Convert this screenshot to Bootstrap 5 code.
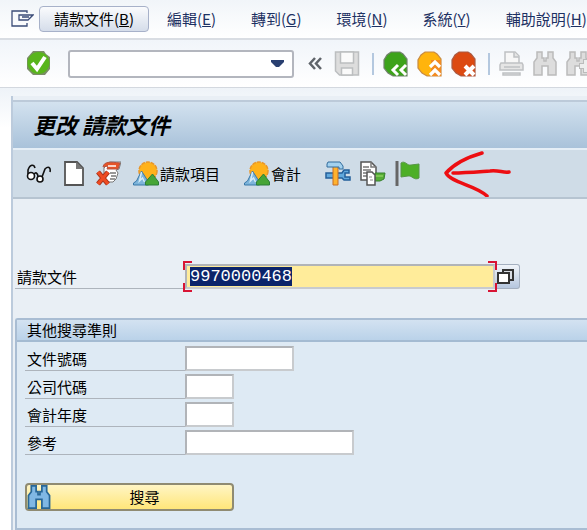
<!DOCTYPE html>
<html lang="zh-Hant">
<head>
<meta charset="utf-8">
<meta name="viewport" content="width=device-width, initial-scale=1">
<title>更改 請款文件</title>
<link href="https://cdn.jsdelivr.net/npm/bootstrap@5.3.0/dist/css/bootstrap.min.css" rel="stylesheet">
<style>
body{font-family:"Noto Sans CJK TC",sans-serif;font-size:15px;line-height:20px;color:#000;background:#fff}
svg{display:block;flex:none}
.menu-bar{height:40px;gap:18px;padding-left:11px;background:linear-gradient(#f1f5f9,#fff);border-bottom:2px solid #d9dde3}
.menu-bar>*{flex:none}
.menu-links{gap:35px}
.menu-links a{color:#1d3163;text-decoration:none}
.menu-start{gap:5px}
.menu-start button{height:26px;padding:0 14px;border:1px solid #a7b1c9;border-radius:4px;background:linear-gradient(#fafbfd,#d5ddea);color:#000;line-height:20px}
.tool-bar{height:48px;padding-left:25px;background:linear-gradient(#f1f5fa,#fff);border-bottom:1px solid #d3d8df}
.plain{border:0;background:none;padding:0;color:#000;flex:none;display:flex;align-items:center;gap:1px;white-space:nowrap}
.command{width:226px;height:28px;margin:0 14px 0 16px;flex:none;border:2px solid #b3b6be;border-radius:3px;appearance:none;background:#fff url("data:image/svg+xml,%3Csvg xmlns='http://www.w3.org/2000/svg' width='13' height='8'%3E%3Cpath d='M0 0H13V2L8 7H5L0 2Z' fill='%23293f70'/%3E%3C/svg%3E") no-repeat right 8px center}
.divider{width:2px;height:22px;background:#b4c8df;flex:none}
.workspace{margin-left:11px;border-left:2px solid #bccbdc;background:#e9eff5;flex:1}
.backdrop{background:linear-gradient(#eef3f8,#fff 40px)}
.heading{height:48px;padding-left:20px;background:linear-gradient(#d3e2ef,#a9c2da);border-top:2px solid #bccad9;font-size:22px;line-height:44px;font-weight:700;font-style:italic}
.app-bar{height:51px;padding-left:13px;background:#cfdce7;border-top:2px solid #e5eef6;border-bottom:2px solid #b6c4d1}
.doc-row{margin:65px 0 0 2px}
.doc-row label{width:170px}
.line-label{height:25px;padding:3px 2px 0;border-bottom:1px solid #adb4bc;flex:none}
.entry{height:25px;border:2px solid #b1b4b8;border-right-color:#c8cbce;border-bottom-color:#c8cbce;border-radius:0;background:#fff;padding:0 3px}
.doc-box{width:310px}
.doc-box .entry{width:100%;background:#ffec9a;font:17px/20px "Liberation Mono",monospace}
.entry:focus{outline:0}
.entry::selection{background:#0b246a;color:#fff}
.corner{position:absolute;width:9px;height:9px;border:0 solid #d81434;pointer-events:none}
.c-tl{left:-2px;top:-3px;border-width:2px 0 0 2px}
.c-bl{left:-2px;bottom:-3px;border-width:0 0 2px 2px}
.c-tr{right:-2px;top:-3px;border-width:2px 2px 0 0}
.c-br{right:-2px;bottom:-3px;border-width:0 2px 2px 0}
.match{width:25px;height:25px;border:1px solid #a4afbf;border-left:0;border-radius:0 3px 3px 0;background:linear-gradient(#f0f4f9,#b5c6de);padding:0 0 0 2px}
.criteria{margin:29px 0 0 2px;border:2px solid #a9bdd3;border-right:0;background:#deeaf4;border-radius:3px 0 0 0}
.criteria legend{float:left;width:100%;margin:0;height:22px;padding:0 10px;font-size:15px;line-height:20px;background:linear-gradient(#d3e2f1,#bad2e9);border-bottom:2px solid #a4bbd2}
.criteria-body{clear:both;padding:4px 8px 17px}
.criteria-body .line-label{width:160px}
.rows{gap:3px}
.w-doc{width:109px}.w-code{width:49px}.w-ref{width:169px}
.search{width:209px;height:28px;margin-top:28px;padding:0;border:2px solid #8f8b72;border-radius:4px;background:linear-gradient(#fff5c4,#ffe67a)}
.search span{flex:1;padding-left:6px}
.g9{margin-left:9px}.g12{margin-left:12px}
</style>
<script src="https://cdn.jsdelivr.net/npm/bootstrap@5.3.0/dist/js/bootstrap.bundle.min.js"></script>
</head>
<body class="min-vh-100 d-flex flex-column overflow-hidden">
<svg width="0" height="0" class="position-absolute" aria-hidden="true">
<defs>
<symbol id="hills" viewBox="0 0 25 25"><circle cx="14.500" cy="10" r="9" fill="#ffb21a" stroke="#e8962a" stroke-width="1.500" stroke-dasharray="4 1"/><path d="M0 24v-2l3-2 5-10 7 11v3z" fill="#7db4da" stroke="#3978a9"/><path d="M8 11 6 20l3-3 2 4" fill="none" stroke="#d5eaf6" stroke-width="1.500"/><path d="M12 24v-3l7-8 6 8v3z" fill="#46a537" stroke="#2b7d38"/></symbol>
<symbol id="glass" viewBox="0 0 24 25"><path d="M4 1h5v6h2v3h2V7h2V1h5v6l3 4v13h-8v-9h-6v9H1V11l3-4z"/></symbol>
</defs>
</svg>
<nav class="menu-bar d-flex align-items-center text-nowrap overflow-hidden" aria-label="選單">
 <div class="menu-start d-flex align-items-center">
  <svg width="23" height="20" viewBox="0 0 23 20" fill="none" stroke="#3b4c78" stroke-width="1.300"><path d="M16 4V2H1v15h15v-3M8 6h14l-5 5H8zM11 8h7"/></svg>
  <button type="button">請款文件(<u>B</u>)</button>
 </div>
 <div class="menu-links d-flex"><a href="#">編輯(<u>E</u>)</a><a href="#">轉到(<u>G</u>)</a><a href="#">環境(<u>N</u>)</a><a href="#">系統(<u>Y</u>)</a><a href="#">輔助說明(<u>H</u>)</a></div>
</nav>
<div class="tool-bar d-flex align-items-center overflow-hidden">
 <button class="plain" type="button" aria-label="輸入"><svg width="27" height="27" viewBox="0 0 27 27"><path d="M8 1h11l2 3 4 3v12l-5 6H8l-6-6V8z" fill="#7b8d68"/><circle cx="13.500" cy="13" r="11" fill="#59b51c"/><path d="m7 13 5 6 8-12" fill="none" stroke="#fff" stroke-width="4"/></svg></button>
 <select class="command" aria-label="指令"><option></option></select>
 <button class="plain" type="button" aria-label="收合"><svg width="14" height="13" viewBox="0 0 14 13" fill="none" stroke="#60656b" stroke-width="2.500"><path d="M7 1 2 6.500 7 12M13 1 8 6.500 13 12"/></svg></button>
 <button class="plain g12" type="button" aria-label="儲存"><svg width="26" height="25" viewBox="0 0 25 25" fill="#ddd" stroke="#bcbec0" stroke-width="1.500"><path d="M1 1h23v23H5l-4-4z"/><path d="M6 1h13v11H6zM7 17h11v7H7z" fill="#fafafa"/></svg></button>
 <span class="divider g12"></span>
 <button class="plain g9" type="button" aria-label="返回"><svg width="25" height="26" viewBox="0 0 25 26"><path d="M8 1h9l3 2 4 5v17H10l-5-3-4-5V9l3-5z" fill="#3da31b" stroke="#71816d" stroke-width="1.200"/><path d="m15 14-5 5 5 5M23 14l-5 5 5 5" fill="none" stroke="#fff" stroke-width="3"/></svg></button>
 <button class="plain g9" type="button" aria-label="結束"><svg width="25" height="26" viewBox="0 0 25 26"><path d="M8 1h9l3 2 4 5v17H10l-5-3-4-5V9l3-5z" fill="#ffb40c" stroke="#c78a42" stroke-width="1.200"/><path d="M14 9h10v16H14z" fill="#f28b22"/><path d="m13 16 5-5 5 5M13 24l5-5 5 5" fill="none" stroke="#fff" stroke-width="3.200"/></svg></button>
 <button class="plain g9" type="button" aria-label="取消"><svg width="25" height="26" viewBox="0 0 25 26"><path d="M8 1h9l3 2 4 5v17H10l-5-3-4-5V9l3-5z" fill="#dc4a12" stroke="#a95a43" stroke-width="1.200"/><path d="m14 15 9 9m0-9-9 9" stroke="#fff" stroke-width="4"/></svg></button>
 <span class="divider g12"></span>
 <button class="plain g9" type="button" aria-label="列印"><svg width="25" height="26" viewBox="0 0 25 26" fill="#e5e5e5" stroke="#bfc1c3" stroke-width="1.500"><path d="M6 12V1h10l4 4v7" fill="#f7f7f7"/><path d="M15 1v5h5M2 12h21l1 2v5H1v-5zM4 22h17v2H4zM5 16h16"/></svg></button>
 <button class="plain g9" type="button" aria-label="尋找"><svg width="24" height="25" fill="#ddd" stroke="#bbb" stroke-width="1.500"><use href="#glass"/></svg></button>
 <button class="plain g9" type="button" aria-label="尋找下一個"><svg width="34" height="25" viewBox="0 0 34 25"><svg width="24" height="25" fill="#ddd" stroke="#bbb" stroke-width="1.500"><use href="#glass"/></svg><path d="M13 15h14M20 8v14" stroke="#bbb" stroke-width="6"/><path d="M14 15h12M20 9v12" stroke="#eee" stroke-width="4"/></svg></button>
</div>
<div class="backdrop d-flex flex-column flex-grow-1">
<main class="workspace mt-2 pt-1">
 <h1 class="heading m-0">更改 請款文件</h1>
 <div class="app-bar d-flex align-items-center overflow-hidden">
  <button class="plain" type="button" aria-label="顯示"><svg width="26" height="20" viewBox="0 0 26 20" fill="none" stroke="#111" stroke-width="1.600"><path d="M9 4C8 0 4 0 2 6v6M24 8c1-5-2-6-5-3l-3 8M8 11c1-4 4-2 4 2"/><circle cx="5" cy="12" r="3.500" fill="#fff"/><circle cx="14" cy="15" r="3" fill="#fff"/></svg></button>
  <button class="plain g12" type="button" aria-label="新增"><svg width="20" height="25" viewBox="0 0 20 25"><path d="M1 1h12l6 6v17H1z" fill="#fff" stroke="#555" stroke-width="1.800"/><path d="M12 1v7h7z" fill="#777"/></svg></button>
  <button class="plain g12" type="button" aria-label="刪除"><svg width="25" height="25" viewBox="0 0 25 25"><path d="m9 6 2-4 3-1h11l-2 7-3 1 2 3-2 6-3 3H8V7z" fill="#fff" stroke="#777"/><path d="M7 6c1-6 8-5 17-4l-2 6H11l1-3z" fill="#e65427" stroke="#b65543"/><path d="M12 5h8" stroke="#fff" stroke-width="1.500"/><path d="M14 12h6M15 15h5M14 18h5" stroke="#777" stroke-width="1.500"/><path d="m2 11 10 12m0-12L2 23" stroke="#a9341c" stroke-width="5"/><path d="m2 11 10 12m0-12L2 23" stroke="#ee4b22" stroke-width="3"/></svg></button>
  <button class="plain g12" type="button"><svg width="26" height="25"><use href="#hills"/></svg>請款項目</button>
  <button class="plain ms-4" type="button"><svg width="26" height="25"><use href="#hills"/></svg>會計</button>
  <button class="plain ms-4" type="button" aria-label="工具"><svg width="26" height="25" viewBox="0 0 26 25"><path d="M1 12h16l2-3h5v3h-4v4h5v3h-6l-2-2H1z" fill="#62a9dc" stroke="#245f9a" stroke-width="1.500"/><path d="M8 5h5v19H8z" fill="#ffb22e" stroke="#c66c25"/><path d="M3 1h12l3 4v3h-4V6H2V3z" fill="#a3d1ef" stroke="#326c9c"/></svg></button>
  <button class="plain g9" type="button" aria-label="複製"><svg width="26" height="25" viewBox="0 0 26 25"><path d="M1 1h10l5 5v13H1z" fill="#fff" stroke="#555" stroke-width="1.500"/><path d="M11 1v5h5M3 6h6M3 9h8M3 12h4M3 15h4" fill="none" stroke="#777" stroke-width="1.500"/><path d="M15 12h10l-1 6-4 2h-5z" fill="#55ad35" stroke="#36802d"/><path d="M15 15h8" stroke="#a8df72"/><path d="M7 11h5l3 3v10H7z" fill="#fff" stroke="#555" stroke-width="1.500"/><path d="M9 16h3M10 19h3" stroke="#888"/></svg></button>
  <button class="plain g9" type="button" aria-label="旗標"><svg width="25" height="25" viewBox="0 0 25 25"><path d="M2 0v25" stroke="#666" stroke-width="3"/><path d="M6 2c4-3 6 3 10 2l8-1v14c-5 3-7-3-11-2l-7 1z" fill="#4daf27" stroke="#579646"/></svg></button>
  <svg class="ms-4" width="67" height="46" viewBox="0 0 67 46" fill="none" stroke="#ed0e12" stroke-width="3.500" stroke-linecap="round" stroke-linejoin="round" aria-hidden="true"><path d="M38 2C24 6 10 13 2 22c5 10 30 12 41 23M9 22c12 0 23-1 37-2 9-1 13 2 19 1"/></svg>
 </div>
 <form>
  <div class="doc-row d-flex">
   <label class="line-label" for="billing">請款文件</label>
   <div class="doc-box position-relative">
    <input class="entry" id="billing" type="text" value="9970000468" autofocus>
    <i class="corner c-tl"></i><i class="corner c-bl"></i><i class="corner c-tr"></i><i class="corner c-br"></i>
   </div>
   <button class="match" type="button" aria-label="搜尋輔助"><svg width="18" height="16" viewBox="0 0 18 16" stroke="#333" stroke-width="2"><path d="M6 1h10v10H6z" fill="#d9dde4"/><path d="M1 4h11v10H1z" fill="#fff"/></svg></button>
  </div>
  <fieldset class="criteria">
   <legend>其他搜尋準則</legend>
   <div class="criteria-body">
    <div class="rows d-flex flex-column">
     <div class="d-flex"><label class="line-label" for="docno">文件號碼</label><input class="entry w-doc" id="docno" type="text"></div>
     <div class="d-flex"><label class="line-label" for="company">公司代碼</label><input class="entry w-code" id="company" type="text"></div>
     <div class="d-flex"><label class="line-label" for="year">會計年度</label><input class="entry w-code" id="year" type="text"></div>
     <div class="d-flex"><label class="line-label" for="ref">參考</label><input class="entry w-ref" id="ref" type="text"></div>
    </div>
    <button class="search d-flex align-items-center" type="button"><svg width="24" height="24" fill="#80b8e4" stroke="#286797" stroke-width="1.800"><use href="#glass"/></svg><span>搜尋</span></button>
   </div>
  </fieldset>
 </form>
</main>
</div>
<script>
const billing = document.getElementById('billing');
billing.focus();
billing.select();
</script>
</body>
</html>
